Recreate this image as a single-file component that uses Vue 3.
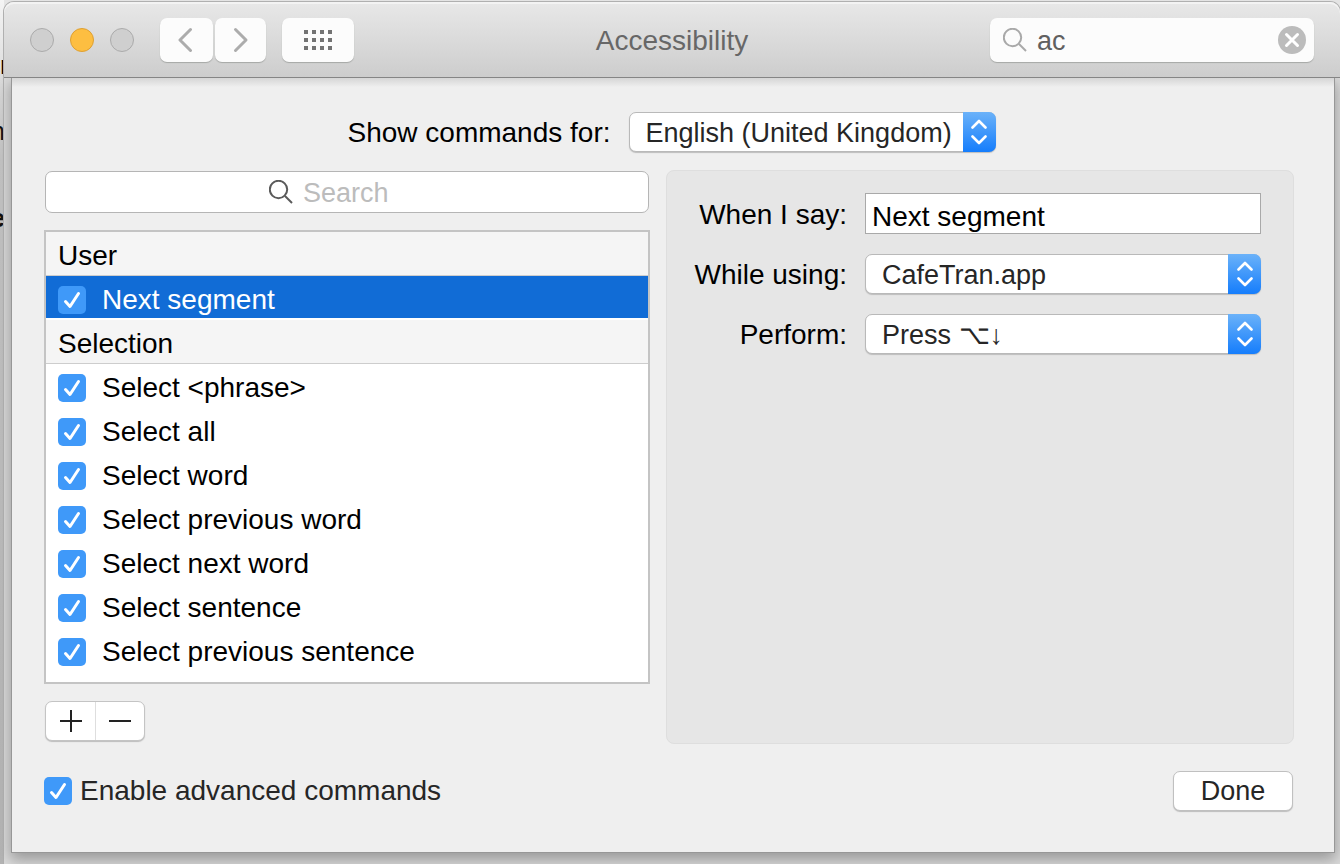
<script setup>
import { ref } from 'vue'

const query = ref('ac')
const filter = ref('')
const phrase = ref('Next segment')
const advanced = ref(true)
const selected = ref('Next segment')

const groups = ref([
  { name: 'User', items: [{ label: 'Next segment', on: true }] },
  {
    name: 'Selection',
    items: [
      { label: 'Select <phrase>', on: true },
      { label: 'Select all', on: true },
      { label: 'Select word', on: true },
      { label: 'Select previous word', on: true },
      { label: 'Select next word', on: true },
      { label: 'Select sentence', on: true },
      { label: 'Select previous sentence', on: true },
    ],
  },
])
</script>

<template>
  <div class="desktop">
    <div class="behind" aria-hidden="true">
      <span class="peek peek-r">r</span>
      <span class="peek peek-n">n</span>
      <span class="peek peek-e">e</span>
    </div>
    <div class="window">
      <header class="titlebar">
        <div class="lights">
          <button class="light" aria-label="Close"></button>
          <button class="light amber" aria-label="Minimise"></button>
          <button class="light" aria-label="Zoom"></button>
        </div>
        <div class="nav">
          <button class="tool back" aria-label="Back">
            <svg width="18" height="26" viewBox="0 0 18 26"><path d="M12.500 2.500 2 13l10.500 10.500" /></svg>
          </button>
          <button class="tool forward" aria-label="Forward">
            <svg width="18" height="26" viewBox="0 0 18 26"><path d="M3.500 2.500 14 13 3.500 23.500" /></svg>
          </button>
        </div>
        <button class="tool grid" aria-label="Show all">
          <svg width="28" height="20" viewBox="0 0 28 20">
            <template v-for="y in 3" :key="y">
              <rect v-for="x in 4" :key="x" :x="(x - 1) * 8" :y="(y - 1) * 8" width="4" height="4" />
            </template>
          </svg>
        </button>
        <h1>Accessibility</h1>
        <div class="find">
          <svg class="lens" width="24" height="24" viewBox="0 0 24 24"><circle cx="9.500" cy="9.500" r="8.700" /><path d="m16 16 7 7" /></svg>
          <input v-model="query" type="text" aria-label="Search preferences" />
          <button class="clear" aria-label="Clear" @click="query = ''">
            <svg width="28" height="28" viewBox="0 0 28 28"><circle cx="14" cy="14" r="14" /><path d="m8.500 8.500 11 11m0-11-11 11" /></svg>
          </button>
        </div>
      </header>

      <main class="sheet">
        <div class="language">
          <label for="language">Show commands for:</label>
          <div class="popup">
            <select id="language"><option>English (United Kingdom)</option></select>
            <span class="arrows"><svg width="16" height="26" viewBox="0 0 16 26"><path d="m1.500 8.500 6.500-6.500 6.500 6.500M1.500 17.500 8 24l6.500-6.500" /></svg></span>
          </div>
        </div>

        <div class="columns">
          <section class="left">
            <label class="filter">
              <svg class="lens dark" width="24" height="24" viewBox="0 0 24 24"><circle cx="9.500" cy="9.500" r="8.700" /><path d="m16 16 7 7" /></svg>
              <input v-model="filter" type="text" placeholder="Search" aria-label="Search commands" />
            </label>
            <div class="list">
              <template v-for="group in groups" :key="group.name">
                <h2>{{ group.name }}</h2>
                <label
                  v-for="item in group.items"
                  :key="item.label"
                  class="row"
                  :class="{ selected: item.label === selected }"
                >
                  <span class="tick">
                    <input v-model="item.on" type="checkbox" />
                    <svg width="28" height="28" viewBox="0 0 28 28"><path d="m7.500 15.500 4.500 5L20.500 7.500" /></svg>
                  </span>
                  {{ item.label }}
                </label>
              </template>
            </div>
            <div class="segments">
              <button aria-label="Add"><svg width="22" height="22" viewBox="0 0 22 22"><path d="M0 11h22M11 0v22" /></svg></button>
              <button aria-label="Remove"><svg width="22" height="22" viewBox="0 0 22 22"><path d="M0 11h22" /></svg></button>
            </div>
          </section>

          <section class="details">
            <label for="say">When I say:</label>
            <input id="say" v-model="phrase" class="say" type="text" />
            <label for="using">While using:</label>
            <div class="popup">
              <select id="using"><option>CafeTran.app</option></select>
              <span class="arrows"><svg width="16" height="26" viewBox="0 0 16 26"><path d="m1.500 8.500 6.500-6.500 6.500 6.500M1.500 17.500 8 24l6.500-6.500" /></svg></span>
            </div>
            <label for="perform">Perform:</label>
            <div class="popup">
              <select id="perform"><option>Press ⌥↓</option></select>
              <span class="arrows"><svg width="16" height="26" viewBox="0 0 16 26"><path d="m1.500 8.500 6.500-6.500 6.500 6.500M1.500 17.500 8 24l6.500-6.500" /></svg></span>
            </div>
          </section>
        </div>

        <footer>
          <label class="advanced">
            <span class="tick">
              <input v-model="advanced" type="checkbox" />
              <svg width="28" height="28" viewBox="0 0 28 28"><path d="m7.500 15.500 4.500 5L20.500 7.500" /></svg>
            </span>
            Enable advanced commands
          </label>
          <button class="done">Done</button>
        </footer>
      </main>
    </div>
  </div>
</template>

<style>
body { background: #d8d8d8; }
</style>

<style scoped>
* { box-sizing: border-box; }
.desktop {
  position: relative;
  display: flex;
  min-height: 100vh;
  padding: 2px 0 0 4px;
  overflow: hidden;
  background: #e4e4e4;
  font-family: "Liberation Sans", Arial, sans-serif;
  font-size: 28px;
  color: #000;
}
button, input, select { margin: 0; font: inherit; color: inherit; }
button { display: flex; align-items: center; justify-content: center; padding: 0; border: 0; }
svg { display: block; flex: none; fill: none; }

.behind {
  position: absolute;
  inset: 0 auto 0 0;
  width: 4px;
  overflow: hidden;
  background: linear-gradient(#f4f4f4, #c4c4c4 160px, #b4b4b4);
}
.peek { position: absolute; right: -1px; font-size: 26px; line-height: 30px; }
.peek-r { top: 50px; right: auto; left: 0; }
.peek-n { top: 116px; }
.peek-e { top: 203px; font-weight: bold; }

.window {
  position: relative;
  flex: 1;
  display: flex;
  flex-direction: column;
  min-width: 0;
  border-radius: 10px 10px 0 0;
  box-shadow: 0 0 0 1px #b0b0b0;
  background: #dcdcdc;
}
.titlebar {
  position: relative;
  z-index: 1;
  display: flex;
  align-items: center;
  height: 76px;
  padding: 0 26px;
  border-radius: 10px 10px 0 0;
  border-bottom: 1px solid #858585;
  background: linear-gradient(#e8e8e8, #cdcdcd);
  box-shadow: inset 0 2px 0 #f3f3f3;
}
.lights { display: flex; gap: 16px; }
.light {
  width: 24px;
  height: 24px;
  border: 1px solid #ababab;
  border-radius: 50%;
  background: #cfcfcf;
}
.light.amber { border-color: #dea032; background: #fdbe41; }
.nav { display: flex; gap: 2px; margin: 0 16px 0 26px; }
.tool {
  height: 44px;
  border-radius: 7px;
  background: #fcfcfc;
  box-shadow: 0 1px 1px #a6a8a6;
}
.tool path { stroke: #acacac; stroke-width: 3; stroke-linecap: round; stroke-linejoin: round; }
.tool rect { fill: #737373; }
.back { width: 53px; }
.forward { width: 51px; }
.grid { width: 72px; }
h1 {
  flex: 1;
  margin: 0;
  padding-top: 2px;
  font-size: 28px;
  font-weight: 400;
  line-height: 32px;
  text-align: center;
  color: #676767;
}
.find {
  display: flex;
  align-items: center;
  gap: 10px;
  width: 324px;
  height: 44px;
  padding: 0 8px 0 13px;
  border-radius: 7px;
  background: #fcfcfc;
  box-shadow: 0 1px 1px #a6a8a6;
}
.find input {
  flex: 1;
  min-width: 0;
  padding: 4px 0 0;
  border: 0;
  outline: 0;
  background: none;
  font-size: 27px;
  color: #606060;
}
.lens { stroke: #a9a9a9; stroke-width: 2; }
.lens.dark { stroke: #5a5a5a; }
.clear { width: 28px; height: 28px; background: none; }
.clear circle { fill: #bcbcbc; }
.clear path { stroke: #fff; stroke-width: 3; stroke-linecap: round; }

.sheet {
  flex: 1;
  display: flex;
  flex-direction: column;
  margin: 0 6px 12px 8px;
  padding: 34px 40px 41px 32px;
  background: linear-gradient(#d6d6d6, #e6e6e6 6px, #efefef 9px);
  box-shadow: 0 0 0 1px #979797, 0 6px 14px 2px #999;
}
.language {
  display: flex;
  align-items: center;
  justify-content: center;
  gap: 18px;
  margin-bottom: 18px;
  padding-left: 5px;
}
.language label, .details label { padding-top: 2px; line-height: 32px; }
.popup {
  position: relative;
  height: 40px;
  border: 1px solid #b9b9b9;
  border-radius: 7px;
  background: #fff;
  box-shadow: 0 1px 1px #bdbdbd;
}
.popup select {
  appearance: none;
  width: 100%;
  height: 38px;
  padding: 2px 42px 0 16px;
  border: 0;
  border-radius: 7px;
  outline: 0;
  background: none;
  font-size: 27px;
  color: #262626;
}
.arrows {
  position: absolute;
  inset: -1px -1px -1px auto;
  display: flex;
  align-items: center;
  justify-content: center;
  width: 33px;
  border-radius: 0 7px 7px 0;
  background: linear-gradient(#6bb2f9, #157dfc);
  pointer-events: none;
}
.arrows path { stroke: #fff; stroke-width: 2.600; stroke-linecap: round; stroke-linejoin: round; }

.columns {
  flex: 1;
  display: grid;
  grid-template-columns: minmax(0, 606fr) minmax(0, 628fr);
  gap: 16px;
}
.left { display: flex; flex-direction: column; }
.details {
  display: grid;
  grid-template-columns: 180px 1fr;
  grid-auto-rows: min-content;
  align-items: center;
  column-gap: 18px;
  row-gap: 20px;
  padding: 22px 32px 22px 0;
  border: 1px solid #dedede;
  border-radius: 8px;
  background: #e6e6e6;
}
.details label { text-align: right; }
.say {
  width: 100%;
  height: 41px;
  padding: 6px 6px 0;
  border: 1px solid #a9a9a9;
  outline: 0;
  background: #fff;
}
.filter {
  display: flex;
  align-items: center;
  justify-content: center;
  gap: 10px;
  height: 42px;
  margin: 1px 1px 17px;
  border: 1px solid #b5b5b5;
  border-radius: 7px;
  background: #fff;
}
.filter input {
  width: 122px;
  padding: 2px 0 0;
  border: 0;
  outline: 0;
  background: none;
  font-size: 27px;
}
.filter input::placeholder { color: #bcbcbc; opacity: 1; }
.list { flex: 1; border: 2px solid #c4c4c4; background: #fff; }
h2 {
  height: 44px;
  margin: 0;
  padding: 0 12px;
  border-bottom: 1px solid #cdcdcd;
  background: #f5f5f5;
  font-size: 28px;
  font-weight: 400;
  line-height: 48px;
}
.row {
  display: flex;
  align-items: center;
  gap: 16px;
  height: 44px;
  padding: 4px 12px 0;
}
.row.selected { background: #116cd6; box-shadow: inset 0 -2px 0 #fff; color: #fff; }
.tick { position: relative; width: 28px; height: 28px; }
.tick input {
  appearance: none;
  display: block;
  width: 28px;
  height: 28px;
  border-radius: 5px;
  background: #3f99f9;
}
.tick svg { position: absolute; inset: 0; pointer-events: none; }
.tick input:not(:checked) + svg { display: none; }
.tick path { stroke: #fff; stroke-width: 3; stroke-linecap: round; stroke-linejoin: round; }
.segments {
  display: flex;
  align-self: flex-start;
  margin: 17px 1px 3px;
  border: 1px solid #c4c4c4;
  border-radius: 7px;
  background: #fff;
  box-shadow: 0 1px 1px #bdbdbd;
}
.segments button { width: 48px; height: 38px; background: none; }
.segments button:first-child { width: 50px; border-right: 1px solid #dedede; }
.segments path { stroke: #222; stroke-width: 2; }
footer {
  display: flex;
  align-items: center;
  justify-content: space-between;
  margin-top: 27px;
}
.advanced { display: flex; align-items: center; gap: 8px; line-height: 32px; color: #262626; }
.done {
  width: 120px;
  height: 40px;
  margin-right: 1px;
  border: 1px solid #c0c0c0;
  border-radius: 7px;
  background: #fff;
  box-shadow: 0 1px 1px #bdbdbd;
  font-size: 27px;
  color: #262626;
}
</style>
